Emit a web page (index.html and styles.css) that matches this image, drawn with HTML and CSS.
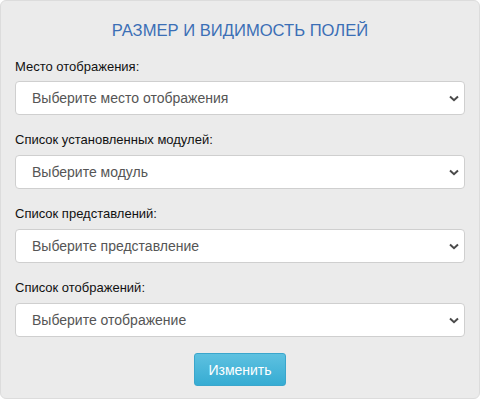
FILE: index.html
```html
<!DOCTYPE html>
<html lang="ru">
<head>
<meta charset="utf-8">
<title>Размер и видимость полей</title>
<link rel="stylesheet" href="styles.css">
</head>
<body>
<div class="panel">
  <h2 class="title">РАЗМЕР И ВИДИМОСТЬ ПОЛЕЙ</h2>
  <div class="group">
    <label class="label">Место отображения:</label>
    <div class="select-wrap">
      <select class="select"><option>Выберите место отображения</option></select>
      <svg class="chev" width="10" height="7" viewBox="0 0 10 7"><path d="M1 1.5 L5 5.2 L9 1.5" fill="none" stroke="#4a4a4a" stroke-width="2"/></svg>
    </div>
  </div>
  <div class="group">
    <label class="label">Список установленных модулей:</label>
    <div class="select-wrap">
      <select class="select"><option>Выберите модуль</option></select>
      <svg class="chev" width="10" height="7" viewBox="0 0 10 7"><path d="M1 1.5 L5 5.2 L9 1.5" fill="none" stroke="#4a4a4a" stroke-width="2"/></svg>
    </div>
  </div>
  <div class="group">
    <label class="label">Список представлений:</label>
    <div class="select-wrap">
      <select class="select"><option>Выберите представление</option></select>
      <svg class="chev" width="10" height="7" viewBox="0 0 10 7"><path d="M1 1.5 L5 5.2 L9 1.5" fill="none" stroke="#4a4a4a" stroke-width="2"/></svg>
    </div>
  </div>
  <div class="group">
    <label class="label">Список отображений:</label>
    <div class="select-wrap">
      <select class="select"><option>Выберите отображение</option></select>
      <svg class="chev" width="10" height="7" viewBox="0 0 10 7"><path d="M1 1.5 L5 5.2 L9 1.5" fill="none" stroke="#4a4a4a" stroke-width="2"/></svg>
    </div>
  </div>
  <div class="actions">
    <button class="btn">Изменить</button>
  </div>
</div>
</body>
</html>
```
FILE: styles.css
```css
html, body {
  margin: 0;
  padding: 0;
  background: #ffffff;
  font-family: "Liberation Sans", Arial, sans-serif;
}
.panel {
  width: 480px;
  height: 399px;
  box-sizing: border-box;
  background: #ebebeb;
  border: 1px solid #dcdcdc;
  border-radius: 6px;
  padding: 0 14px;
}
.title {
  margin: 20px 0 17px;
  font-size: 16.6px;
  line-height: 20px;
  font-weight: normal;
  text-align: center;
  color: #3b6fb6;
}
.group {
  display: flex;
  flex-direction: column;
  margin-bottom: 17px;
}
.label {
  font-size: 13px;
  line-height: 18px;
  color: #111;
  margin-bottom: 5px;
}
.group + .group .label {
  margin-top: -1px;
  margin-bottom: 6px;
}
.select-wrap {
  position: relative;
}
.select {
  appearance: none;
  -webkit-appearance: none;
  width: 100%;
  height: 34px;
  box-sizing: border-box;
  border: 1px solid #cfcfcf;
  border-radius: 4px;
  background: #fff;
  padding: 0 16px;
  font-family: "Liberation Sans", Arial, sans-serif;
  font-size: 14px;
  color: #555;
  outline: none;
}
.chev {
  position: absolute;
  right: 6px;
  top: 14px;
}
.actions {
  display: flex;
  justify-content: center;
  margin-top: -1px;
}
.btn {
  height: 33px;
  padding: 0 13px;
  border: 1px solid #3aa6cc;
  border-radius: 3px;
  background: linear-gradient(#5ec1e0, #36acd3);
  color: #fff;
  font-family: "Liberation Sans", Arial, sans-serif;
  font-size: 14px;
}
```
